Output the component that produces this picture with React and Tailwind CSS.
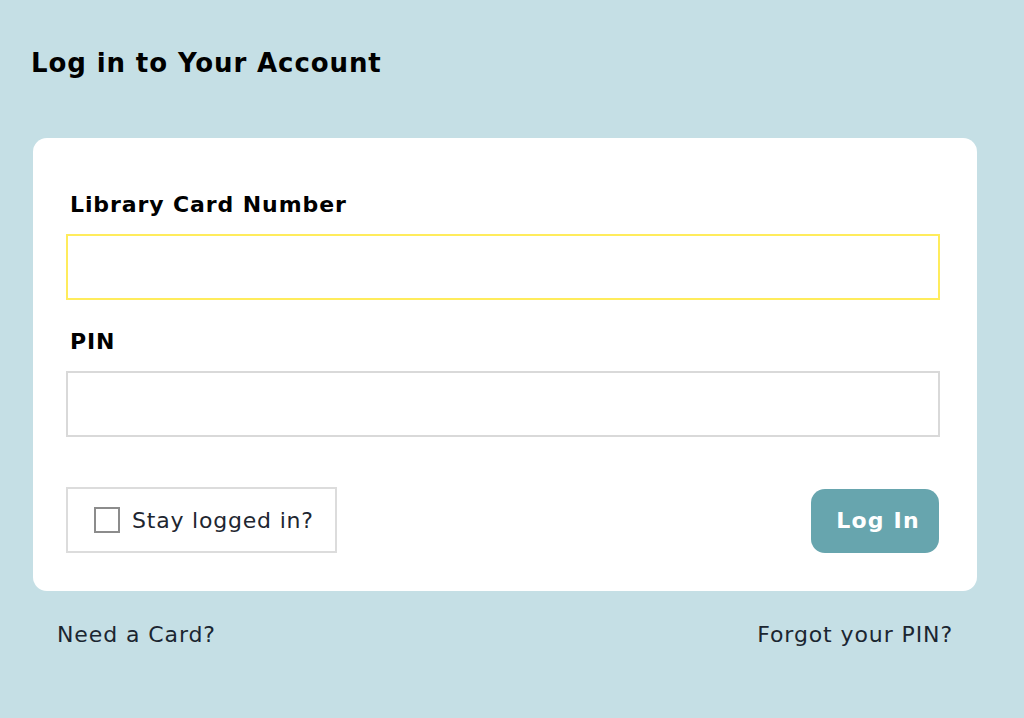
export default function App() {
  const font = { fontFamily: '"DejaVu Sans", Verdana, sans-serif' };
  return (
    <div className="w-[1024px] h-[718px] bg-[#c5dfe5] overflow-hidden" style={font}>
      <h1 className="pl-[31px] pt-[47px] text-[26px] leading-[32px] font-bold text-black tracking-[0.9px]">
        Log in to Your Account
      </h1>
      <div className="ml-[33px] mt-[59px] w-[944px] bg-white rounded-[14px] pl-[33px] pr-[37px] pt-[51px] pb-[38px]">
        <label className="block pl-[4px] pt-[1px] h-[30px] text-[22px] leading-[30px] font-bold text-black tracking-[0.9px]">
          Library Card Number
        </label>
        <div className="mt-[15px] h-[66px] border-2 border-[#ffec5c] bg-white"></div>
        <label className="block mt-[26px] pl-[4px] pt-[1px] h-[30px] text-[22px] leading-[30px] font-bold text-black tracking-[0.9px]">
          PIN
        </label>
        <div className="mt-[15px] h-[66px] border-2 border-[#d9d9d9] bg-white"></div>
        <div className="mt-[50px] flex items-end justify-between">
          <div className="w-[271px] h-[66px] border-2 border-[#dcdcdc] flex items-center pl-[26px]">
            <span className="w-[26px] h-[26px] border-2 border-[#8c8c8c] bg-white"></span>
            <span className="ml-[12px] pt-[2px] text-[22px] leading-[30px] text-[#1e2630] tracking-[0.8px]">Stay logged in?</span>
          </div>
          <button className="mr-[1px] w-[128px] h-[64px] rounded-[14px] bg-[#67a5ae] pl-[6px] text-white text-[22px] font-bold leading-[30px] tracking-[1.2px]">
            Log In
          </button>
        </div>
      </div>
      <div className="mt-[29px] ml-[57px] mr-[71px] flex justify-between text-[22px] leading-[30px] text-[#1b2631] tracking-[0.9px]">
        <span>Need a Card?</span>
        <span>Forgot your PIN?</span>
      </div>
    </div>
  );
}
